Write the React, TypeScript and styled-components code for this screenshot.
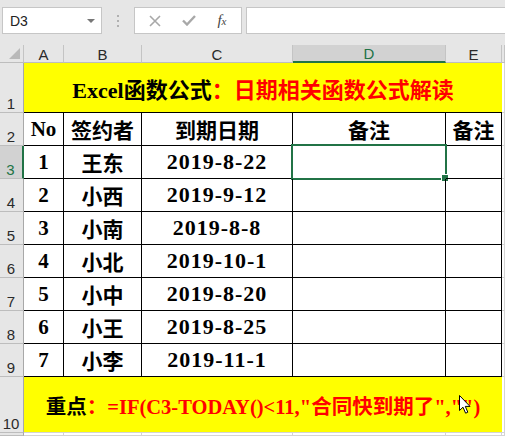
import React from "react";
import styled, { createGlobalStyle, css } from "styled-components";

const GlobalStyle = createGlobalStyle`
  html, body { margin: 0; padding: 0; background: #e6e6e6; }
  * { box-sizing: border-box; }
`;

const Page = styled.div`
  position: relative;
  width: 505px;
  height: 436px;
  overflow: hidden;
  background: #e6e6e6;
`;

const Toolbar = styled.div`
  display: flex;
  align-items: stretch;
  height: 45px;
  padding: 7px 0 11px 2px;
`;

const NameBox = styled.div`
  display: flex;
  align-items: center;
  justify-content: space-between;
  width: 100px;
  padding: 0 6px 0 7px;
  background: #fff;
  border: 1px solid #c6c6c6;
  font-family: "Liberation Sans", sans-serif;
  font-size: 14px;
  color: #222;
`;

const Caret = styled.span`
  width: 0;
  height: 0;
  border-left: 4px solid transparent;
  border-right: 4px solid transparent;
  border-top: 4px solid #777;
`;

const Dots = styled.div`
  display: flex;
  flex-direction: column;
  justify-content: center;
  gap: 3px;
  width: 32px;
  align-items: center;
  span {
    width: 2px;
    height: 2px;
    background: #b0b0b0;
  }
`;

const FxBox = styled.div`
  display: flex;
  align-items: center;
  justify-content: space-around;
  width: 108px;
  padding: 0 4px;
  background: #fff;
  border: 1px solid #c6c6c6;
`;

const FxLabel = styled.span`
  font-family: "Liberation Serif", serif;
  font-style: italic;
  font-size: 15px;
  color: #444;
  small { font-size: 11px; }
`;

const FormulaInput = styled.div`
  flex: 1;
  margin-left: 4px;
  background: #fff;
  border: 1px solid #c6c6c6;
  border-right: none;
`;

const Sheet = styled.div`
  display: grid;
  grid-template-columns: 24px 40px 78px 151px 153px 56px 1fr;
  grid-template-rows: 18px 50px repeat(8, 33px) 56px 1fr;
  height: 391px;
  background: #fff;
`;

const Corner = styled.div`
  position: relative;
  background: #e6e6e6;
  border-right: 1px solid #c4c4c4;
  border-bottom: 1px solid #bdbdbd;
  &::after {
    content: "";
    position: absolute;
    right: 3px;
    bottom: 3px;
    border-left: 11px solid transparent;
    border-bottom: 11px solid #b9b9b9;
  }
`;

const headFont = css`
  font-family: "Liberation Sans", "DejaVu Sans", sans-serif;
  font-size: 15px;
  color: #2a2a2a;
`;

const ColHead = styled.div<{ $active?: boolean }>`
  ${headFont};
  display: flex;
  align-items: center;
  justify-content: center;
  padding-top: 1px;
  background: ${(p) => (p.$active ? "#d2d2d2" : "#e6e6e6")};
  border-right: 1px solid #c4c4c4;
  border-bottom: ${(p) => (p.$active ? "2px solid #217346" : "1px solid #bdbdbd")};
  color: ${(p) => (p.$active ? "#217346" : "#2a2a2a")};
`;

const RowHead = styled.div<{ $active?: boolean }>`
  ${headFont};
  display: flex;
  align-items: flex-end;
  justify-content: center;
  padding: 0 1px 0 0;
  line-height: 17px;
  background: ${(p) => (p.$active ? "#d2d2d2" : "#e6e6e6")};
  border-right: ${(p) => (p.$active ? "2px solid #217346" : "1px solid #a8a8a8")};
  border-bottom: 1px solid #bdbdbd;
  color: ${(p) => (p.$active ? "#217346" : "#2a2a2a")};
`;

const cellFont = css`
  font-family: "Liberation Serif", "Noto Sans CJK SC", serif;
  font-weight: 700;
  color: #000;
`;

const Cell = styled.div<{ $date?: boolean }>`
  ${cellFont};
  position: relative;
  display: flex;
  align-items: center;
  justify-content: center;
  font-size: ${(p) => (p.$date ? "22px" : "21px")};
  letter-spacing: ${(p) => (p.$date ? "1px" : "0")};
  border-right: 1px solid #000;
  border-bottom: 1px solid #000;
  white-space: nowrap;
`;

const Selection = styled.div`
  position: absolute;
  left: -2px;
  top: -2px;
  right: -2px;
  bottom: -2px;
  border: 2px solid #217346;
  &::after {
    content: "";
    position: absolute;
    right: -4px;
    bottom: -4px;
    width: 6px;
    height: 6px;
    background: #217346;
    border: 1px solid #fff;
  }
`;

const Banner = styled.div<{ $top?: boolean }>`
  ${cellFont};
  grid-column: 2 / 7;
  display: flex;
  align-items: center;
  justify-content: center;
  font-size: ${(p) => (p.$top ? "22px" : "20.5px")};
  background: #ffff00;
  white-space: nowrap;
  border-bottom: 1px solid ${(p) => (p.$top ? "#000" : "#d4d4d4")};
`;

const Red = styled.span`
  color: #ff0000;
`;

const Blank = styled.div`
  border-right: 1px solid #d4d4d4;
  border-bottom: 1px solid #d4d4d4;
`;

const Cursor = styled.svg`
  position: absolute;
  left: 459px;
  top: 395px;
`;

const rows = [
  ["1", "王东", "2019-8-22"],
  ["2", "小西", "2019-9-12"],
  ["3", "小南", "2019-8-8"],
  ["4", "小北", "2019-10-1"],
  ["5", "小中", "2019-8-20"],
  ["6", "小王", "2019-8-25"],
  ["7", "小李", "2019-11-1"],
];

const App: React.FC = () => (
  <Page>
    <GlobalStyle />
    <Toolbar>
      <NameBox>
        D3
        <Caret />
      </NameBox>
      <Dots>
        <span />
        <span />
        <span />
      </Dots>
      <FxBox>
        <svg width="12" height="12" viewBox="0 0 12 12">
          <path d="M1 1 L11 11 M11 1 L1 11" stroke="#a8a8a8" strokeWidth="1.6" />
        </svg>
        <svg width="14" height="11" viewBox="0 0 14 11">
          <path d="M1 5.5 L5 9.5 L13 1" stroke="#a8a8a8" strokeWidth="2.4" fill="none" />
        </svg>
        <FxLabel>
          f<small>x</small>
        </FxLabel>
      </FxBox>
      <FormulaInput />
    </Toolbar>

    <Sheet>
      <Corner />
      {["A", "B", "C", "D", "E"].map((c) => (
        <ColHead key={c} $active={c === "D"}>
          {c}
        </ColHead>
      ))}
      <ColHead />

      <RowHead>1</RowHead>
      <Banner $top>
        Excel函数公式<Red>：日期相关函数公式解读</Red>
      </Banner>
      <Blank />

      <RowHead>2</RowHead>
      <Cell>No</Cell>
      <Cell>签约者</Cell>
      <Cell>到期日期</Cell>
      <Cell>备注</Cell>
      <Cell>备注</Cell>
      <Blank />

      {rows.map((r, i) => (
        <React.Fragment key={r[0]}>
          <RowHead $active={i === 0}>{i + 3}</RowHead>
          <Cell>{r[0]}</Cell>
          <Cell>{r[1]}</Cell>
          <Cell $date>{r[2]}</Cell>
          <Cell>{i === 0 && <Selection />}</Cell>
          <Cell />
          <Blank />
        </React.Fragment>
      ))}

      <RowHead>10</RowHead>
      <Banner>
        重点<Red>：=IF(C3-TODAY()&lt;11,"合同快到期了","")</Red>
      </Banner>
      <Blank />

      <RowHead />
      <Blank />
      <Blank />
      <Blank />
      <Blank />
      <Blank />
      <Blank />
    </Sheet>

    <Cursor width="12" height="19" viewBox="0 0 12 19">
      <path
        d="M0.5 0.5 L0.5 15.5 L4 12.2 L6.6 18.2 L8.8 17.2 L6.3 11.4 L11 11.4 Z"
        fill="#fff"
        stroke="#000"
        strokeWidth="1"
        strokeLinejoin="miter"
      />
    </Cursor>
  </Page>
);

export default App;
